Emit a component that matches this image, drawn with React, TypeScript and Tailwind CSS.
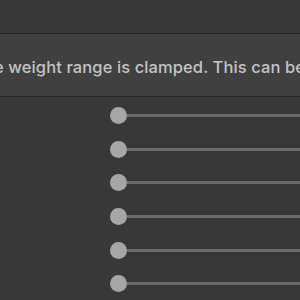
import React from 'react';

const rows = [0, 1, 2, 3, 4, 5];

export default function App() {
  return (
    <div
      className="w-[300px] h-[300px] overflow-hidden bg-[#383838]"
      style={{ fontFamily: 'Inter, "Noto Sans", sans-serif' }}
    >
      {/* Help box */}
      <div className="mt-[33px] h-[64px] border-y border-[#232323] bg-[#404040] flex items-center overflow-hidden">
        <p className="ml-[-6px] mt-[5px] whitespace-nowrap text-[16.5px] tracking-[0.1px] font-medium text-[#c4c4c4]">
          e weight range is clamped. This can be
        </p>
      </div>

      {/* Sliders */}
      <div className="mt-[2px] flex flex-col">
        {rows.map((r) => (
          <div key={r} className="h-[33.6px] flex items-center pl-[110px]">
            <div className="w-[17px] h-[17px] rounded-full bg-[#a6a6a6] shrink-0" />
            <div className="flex-1 h-[3px] bg-[#6b6b6b]" />
          </div>
        ))}
      </div>
    </div>
  );
}
